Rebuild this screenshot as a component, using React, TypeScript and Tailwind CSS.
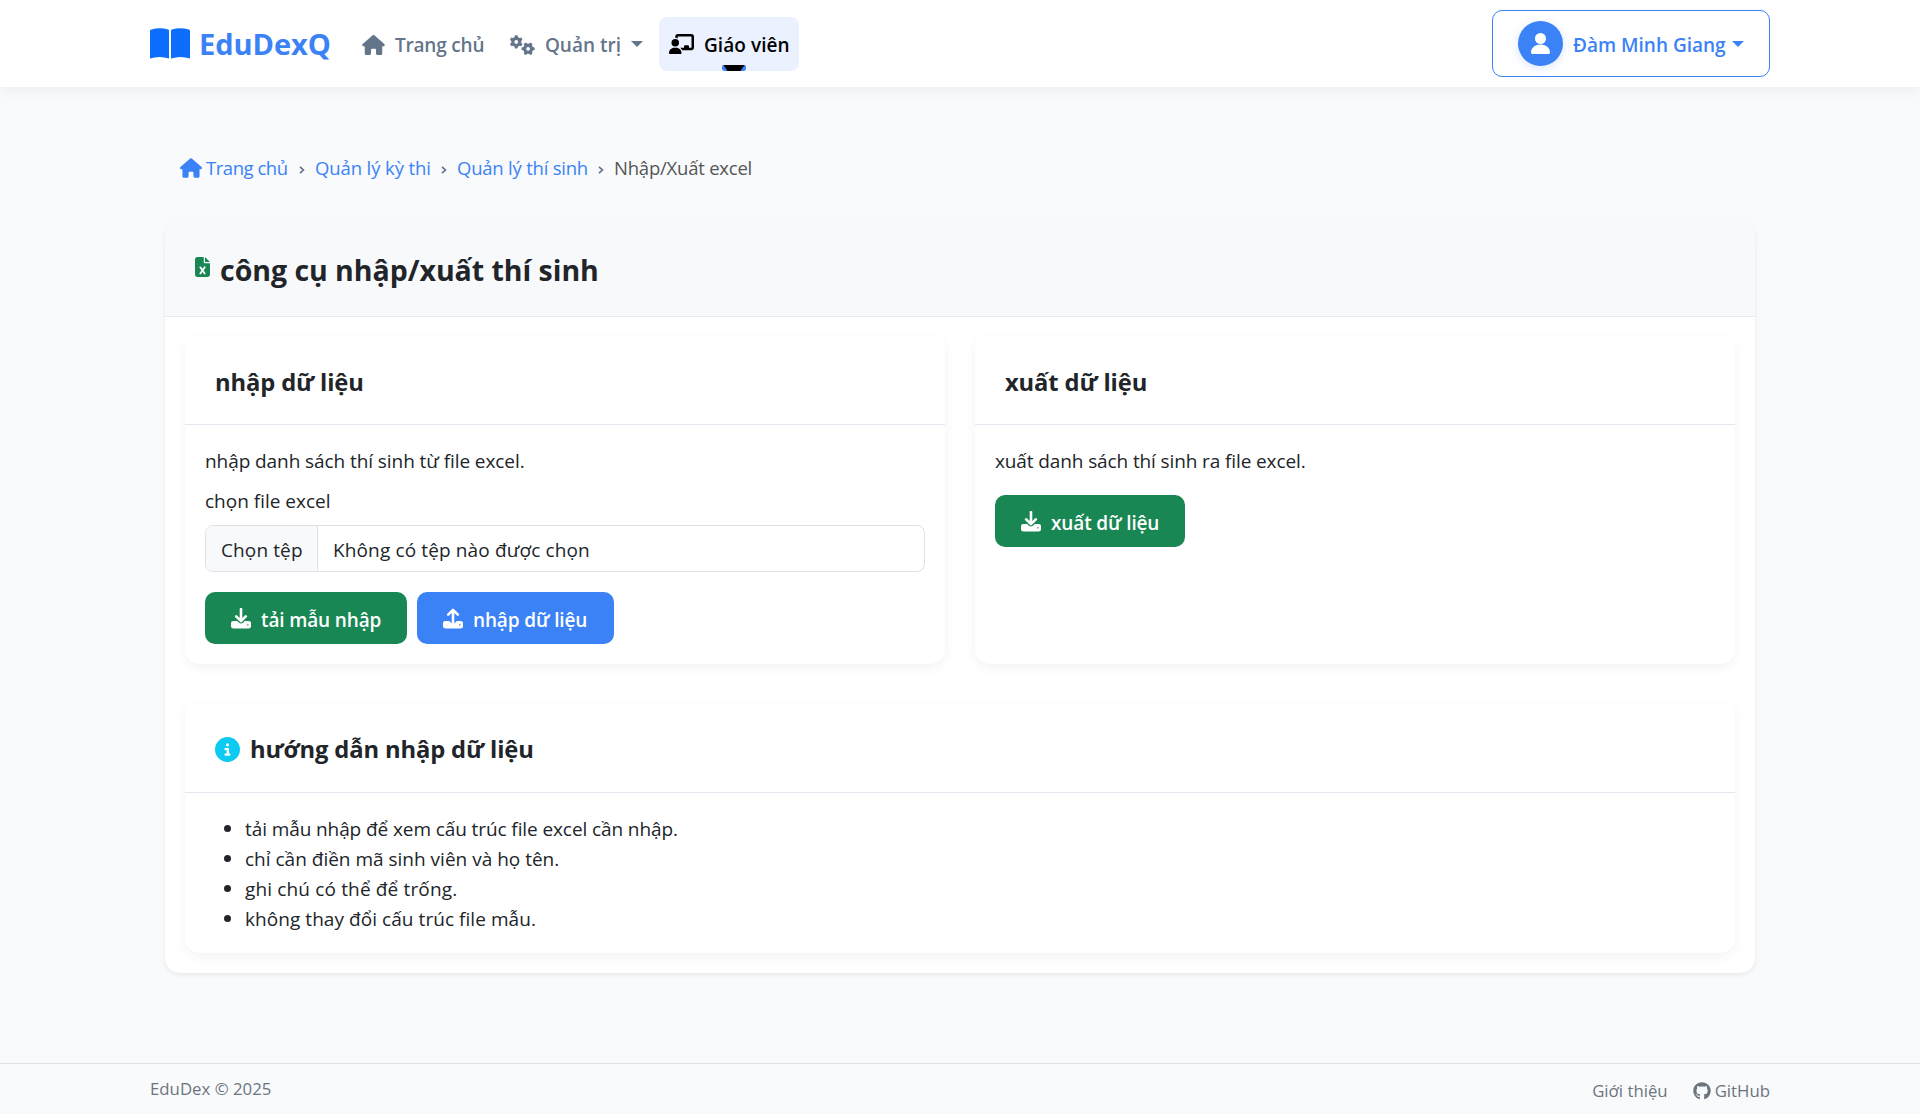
import type { ReactNode } from "react";
import {
  FaChalkboardUser,
  FaCircleInfo,
  FaFileExcel,
  FaGears,
  FaGithub,
  FaHouse,
} from "react-icons/fa6";

function BookIcon() {
  return (
    <svg viewBox="0 0 40 31" className="h-[31px] w-10 shrink-0" fill="#0d6efd">
      <path d="M0 3.2Q0 2 1.2 1.6Q10-1.2 18.2 1.6Q19 2 19 3V30.4Q9.6 27.4 0 30.4Z" />
      <path d="M21 3Q21 2 21.8 1.6Q30-1.2 38.8 1.6Q40 2 40 3.2V30.4Q30.6 27.4 21 30.4Z" />
    </svg>
  );
}

function TrayIcon({ up = false }: { up?: boolean }) {
  return (
    <svg viewBox="0 0 20 21" className="h-[21px] w-5 shrink-0" fill="currentColor">
      <path d="M2.6 13H6.2L8 14.8Q10 16.4 12 14.8L13.8 13H17.4Q20 13 20 15.4V18Q20 20.5 17.4 20.5H2.6Q0 20.5 0 18V15.4Q0 13 2.6 13Z" />
      <path
        d={up ? "M10 15V2.2M5.2 6.6L10 1.8L14.8 6.6" : "M10 1V12.6M5.2 8.4L10 13.2L14.8 8.4"}
        fill="none"
        stroke="currentColor"
        strokeWidth="2.6"
        strokeLinecap="round"
        strokeLinejoin="round"
      />
      <circle cx="16.8" cy="16.8" r="0.9" className="fill-black/40" />
    </svg>
  );
}

function Caret() {
  return (
    <span className="h-0 w-0 border-x-[6px] border-t-[6px] border-x-transparent border-t-current" />
  );
}

function Crumb() {
  return (
    <span className="flex w-[18px] pt-1">
      <svg viewBox="0 0 6 8" className="ml-0.5 h-2 w-1.5" fill="none" stroke="#64748b" strokeWidth="1.7">
        <path d="M1 0.8L4.4 4L1 7.2" />
      </svg>
    </span>
  );
}

function Panel({
  title,
  icon,
  headerHeight = "h-[88px]",
  children,
}: {
  title: string;
  icon?: ReactNode;
  headerHeight?: string;
  children: ReactNode;
}) {
  return (
    <section className="rounded-t-lg rounded-b-[15px] bg-white shadow-[0_4px_12px_rgba(0,0,0,0.05)]">
      <div className={`flex items-center gap-2.5 border-b border-[#e2e8f0] px-[30px] pt-0.5 ${headerHeight}`}>
        {icon}
        <h2 className="text-[23.75px] leading-[30px] font-bold tracking-[-0.005em]">{title}</h2>
      </div>
      <div className="p-5">{children}</div>
    </section>
  );
}

function ActionButton({ label, tone, up, width }: { label: string; tone: string; up?: boolean; width: string }) {
  return (
    <button
      className={`flex h-[52px] items-center gap-2.5 rounded-[10px] pl-[26px] text-[19px] font-semibold whitespace-nowrap text-white ${tone} ${width}`}
    >
      <TrayIcon up={up} />
      <span className="pt-[3px] tracking-[-0.007em]">{label}</span>
    </button>
  );
}

const steps = [
  { text: "tải mẫu nhập để xem cấu trúc file excel cần nhập.", tracking: "tracking-[-0.005em]" },
  { text: "chỉ cần điền mã sinh viên và họ tên.", tracking: "" },
  { text: "ghi chú có thể để trống.", tracking: "tracking-[0.008em]" },
  { text: "không thay đổi cấu trúc file mẫu.", tracking: "tracking-[0.003em]" },
];

export default function App() {
  return (
    <div className="flex min-h-[1114px] flex-col bg-[#f8fafc] font-['Open_Sans','Noto_Sans',sans-serif] text-[19px] leading-[30px] text-[#212529]">
      <header className="relative h-[87px] bg-white shadow-[0_4px_12px_rgba(0,0,0,0.05)]">
        <div className="mx-auto flex h-full w-[1620px] items-center">
          <div className="flex items-center gap-[9px]">
            <BookIcon />
            <span className="text-[29px] font-bold tracking-[-0.001em] text-[#3b82f6]">EduDexQ</span>
          </div>
          <nav className="ml-[21px] flex items-center font-semibold text-[#64748b]">
            <a className="flex w-[148px] items-center gap-2.5 pl-2.5">
              <FaHouse className="mt-0.5 h-5 w-[23px] shrink-0" />
              <span className="pt-[3px] whitespace-nowrap tracking-[-0.01em]">Trang chủ</span>
            </a>
            <a className="flex w-[159px] items-center gap-2.5 pl-2.5">
              <FaGears className="mt-0.5 h-5 w-[25px] shrink-0" />
              <span className="pt-[3px] whitespace-nowrap">Quản trị</span>
              <Caret />
            </a>
            <a className="relative flex h-[54px] w-[140px] items-center gap-2.5 rounded-lg bg-[#ebf1fe] pl-2.5 text-black">
              <FaChalkboardUser className="h-5 w-[25px] shrink-0" />
              <span className="pt-[3px] whitespace-nowrap tracking-[0.004em]">Giáo viên</span>
              <svg viewBox="0 0 24 6" className="absolute bottom-0 left-[63px] h-1.5 w-6">
                <path d="M0 1.5Q0 0 1.5 0H22.5Q24 0 24 1.5V3Q24 6 21 6H3Q0 6 0 3Z" fill="#3b82f6" />
                <path d="M1.5 0H22.5L18.5 6H5.5Z" fill="#000" />
              </svg>
            </a>
          </nav>
          <button className="ml-auto flex h-[67px] w-[278px] items-center gap-2.5 rounded-[10px] border border-[#3b82f6] pl-[25px] text-[#3b82f6]">
            <span className="flex size-[45px] items-center justify-center rounded-full bg-[#3b82f6] shadow-[0_2px_10px_rgba(59,130,246,0.2)]">
              <svg viewBox="0 0 19 21" className="h-[21px] w-[19px]" fill="#fff">
                <circle cx="9.5" cy="5.5" r="5.5" />
                <path d="M0 19.6C0 8.8 19 8.8 19 19.6Q19 21 17.6 21H1.4Q0 21 0 19.6Z" />
              </svg>
            </span>
            <span className="flex items-center gap-1.5 font-semibold whitespace-nowrap">
              <span className="pt-[3px]">Đàm Minh Giang</span>
              <Caret />
            </span>
          </button>
        </div>
      </header>

      <main className="mx-auto w-[1590px]">
        <nav className="flex h-[134px] items-center pt-[27px] pl-[15px] text-[18.5px] whitespace-nowrap text-[#3b82f6]">
          <FaHouse className="mr-1 h-[22px] w-[22px]" />
          <span className="w-[91px] tracking-[-0.025em]">Trang chủ</span>
          <Crumb />
          <span className="w-[124px] tracking-[-0.006em]">Quản lý kỳ thi</span>
          <Crumb />
          <span className="w-[139px] tracking-[-0.012em]">Quản lý thí sinh</span>
          <Crumb />
          <span className="tracking-[-0.012em] text-[#555]">Nhập/Xuất excel</span>
        </nav>

        <div className="rounded-[15px] bg-white shadow-[0_2px_5px_rgba(0,0,0,0.07)]">
          <div className="flex h-24 items-center rounded-t-[15px] border-b border-[#e2e8f0] bg-[#f8f9fb] pl-[30px]">
            <FaFileExcel className="mr-2.5 mb-[3px] h-5 w-[15px] text-[#198754]" />
            <h1 className="pt-0.5 text-[28.5px] font-bold tracking-[-0.001em]">công cụ nhập/xuất thí sinh</h1>
          </div>
          <div className="flex flex-col gap-10 p-5">
            <div className="grid h-[327px] grid-cols-2 gap-[30px]">
              <Panel title="nhập dữ liệu">
                <p className="h-[30px] pt-px tracking-[-0.004em]">nhập danh sách thí sinh từ file excel.</p>
                <label className="mt-2.5 block h-[30px] pt-px">chọn file excel</label>
                <div className="mt-2.5 flex h-[47px] items-center overflow-hidden rounded-lg border border-[#dee2e6]">
                  <span className="flex h-full w-[112px] items-center border-r border-[#dee2e6] bg-[#f8f9fa] pt-0.5 pl-[15px] tracking-[0.006em]">
                    Chọn tệp
                  </span>
                  <span className="pt-0.5 pl-[15px] tracking-[0.007em]">Không có tệp nào được chọn</span>
                </div>
                <div className="mt-5 flex gap-2.5">
                  <ActionButton label="tải mẫu nhập" tone="bg-[#198754]" width="w-[202px]" />
                  <ActionButton label="nhập dữ liệu" tone="bg-[#3b82f6]" width="w-[197px]" up />
                </div>
              </Panel>
              <Panel title="xuất dữ liệu">
                <p className="mb-5 h-[30px] pt-px tracking-[-0.006em]">xuất danh sách thí sinh ra file excel.</p>
                <ActionButton label="xuất dữ liệu" tone="bg-[#198754]" width="w-[190px]" />
              </Panel>
            </div>
            <Panel
              title="hướng dẫn nhập dữ liệu"
              headerHeight="h-[89px]"
              icon={<FaCircleInfo className="size-[25px] text-[#0dcaf0]" />}
            >
              <ul>
                {steps.map((step) => (
                  <li key={step.text} className="flex h-[30px] items-center">
                    <span className="mr-[14px] ml-[19px] size-[7px] rounded-full bg-[#212529]" />
                    <span className={`pt-0.5 ${step.tracking}`}>{step.text}</span>
                  </li>
                ))}
              </ul>
            </Panel>
          </div>
        </div>
      </main>

      <footer className="mt-auto h-[51px] border-t border-[#dee2e6] bg-[#f8fafc] text-[16.8px] text-[#6c757d]">
        <div className="mx-auto flex w-[1620px] justify-between pt-2.5">
          <span>EduDex © 2025</span>
          <div className="flex items-center gap-[25px] pt-0.5">
            <span>Giới thiệu</span>
            <span className="flex items-center gap-1">
              <FaGithub className="size-[18px]" /> GitHub
            </span>
          </div>
        </div>
      </footer>
    </div>
  );
}
